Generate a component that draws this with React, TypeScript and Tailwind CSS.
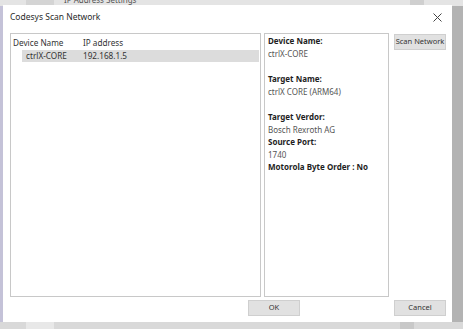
import React from "react";

const font = { fontFamily: '"Noto Sans", "Open Sans", Arial, sans-serif' };

function WinButton({ label, className = "" }: { label: string; className?: string }) {
  return (
    <button
      className={`h-[16px] w-[52px] whitespace-nowrap border border-[#cfcfcf] bg-[#e1e1e1] px-0 text-[7.5px] leading-none text-[#333] ${className}`}
    >
      {label}
    </button>
  );
}

function Info({ label, value, gap }: { label: string; value?: string; gap?: boolean }) {
  return (
    <div className={gap ? "mb-[13px]" : ""}>
      <div className="font-bold text-[#1e1e1e]">{label}</div>
      {value && <div className="text-[#555]">{value}</div>}
    </div>
  );
}

export default function App() {
  return (
    <div className="relative h-[329px] w-[463px] overflow-hidden bg-[#b3b3b3]" style={font}>
      {/* window behind */}
      <div className="absolute left-0 top-0 h-[6px] w-[463px] overflow-hidden bg-[#e4e4e4]">
        <div className="absolute left-[26px] top-0 h-[6px] w-[28px] bg-[#d4d4d4]" />
        <div className="absolute left-[64px] top-[-5px] text-[8px] leading-[10px] text-[#555]">IP Address Settings</div>
        <div className="absolute left-[410px] top-0 h-[6px] w-[14px] bg-[#cfcfcf]" />
      </div>
      <div className="absolute bottom-0 left-0 h-[7px] w-[463px] bg-[#d9d9d9]">
        <div className="absolute left-[26px] h-[7px] w-[28px] bg-[#e8e8e8]" />
        <div className="absolute left-[400px] h-[7px] w-[14px] bg-[#c8c8c8]" />
      </div>
      <div className="absolute left-0 top-[6px] h-[316px] w-[3px] bg-[#c4c2d8]" />

      {/* dialog */}
      <div className="absolute left-[3px] top-[5px] flex h-[317px] w-[449px] flex-col bg-white">
        <div className="flex h-[24px] items-center justify-between pl-[7px] pr-[10px]">
          <span className="text-[8.5px] text-[#2a2a2a]">Codesys Scan Network</span>
          <svg width="9" height="9" viewBox="0 0 9 9" className="text-[#444]">
            <path d="M0.5 0.5 L8.5 8.5 M8.5 0.5 L0.5 8.5" stroke="currentColor" strokeWidth="1" />
          </svg>
        </div>
        <div className="flex gap-[3px] pl-[7px] pr-[6px] pt-[4px]">
          {/* list */}
          <div className="h-[264px] w-[251px] border border-[#c8c8c8] text-[8.2px]">
            <div className="flex h-[16px] items-center pt-[3px] pl-[2px] text-[#333]">
              <span className="w-[70px]">Device Name</span>
              <span>IP address</span>
            </div>
            <div className="ml-[11px] mr-[1px] flex h-[12px] items-center bg-[#dcdcdc] pl-[4px] text-[#333]">
              <span className="w-[57px]">ctrlX-CORE</span>
              <span>192.168.1.5</span>
            </div>
          </div>
          {/* details */}
          <div className="h-[264px] w-[125px] border border-[#c8c8c8] pl-[3px] pt-[1px] text-[8px] leading-[12.5px]">
            <Info label="Device Name:" value="ctrlX-CORE" gap />
            <Info label="Target Name:" value="ctrlX CORE (ARM64)" gap />
            <Info label="Target Verdor:" value="Bosch Rexroth AG" />
            <Info label="Source Port:" value="1740" />
            <Info label="Motorola Byte Order : No" />
          </div>
          <div className="flex flex-1 justify-end pt-[1px]">
            <WinButton label="Scan Network" />
          </div>
        </div>
        <div className="flex items-start pl-[245px] pr-[6px] pt-[3px]">
          <WinButton label="OK" />
          <div className="flex-1" />
          <WinButton label="Cancel" />
        </div>
      </div>
    </div>
  );
}
